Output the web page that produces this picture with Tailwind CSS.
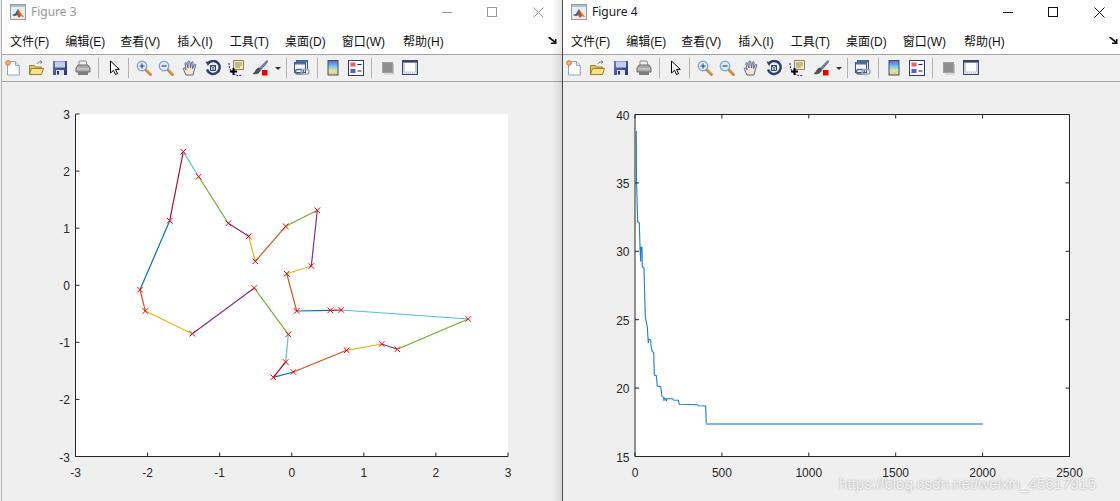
<!DOCTYPE html>
<html lang="en">
<head>
    <meta charset="UTF-8">
    <title>Figure 3 / Figure 4</title>
    <script src="https://cdn.jsdelivr.net/npm/@tailwindcss/browser@4"></script>
</head>
<body class="m-0 overflow-hidden bg-[#efefef] font-['Liberation_Sans','Noto_Sans_CJK_SC',sans-serif]">

<!-- shared toolbar icons -->
<svg class="absolute w-0 h-0">
    <defs>
        <linearGradient id="cb" x1="0" y1="0" x2="0" y2="1">
            <stop offset="0" stop-color="#6a5ad0"/>
            <stop offset=".4" stop-color="#78c8e8"/>
            <stop offset=".7" stop-color="#d8e8a0"/>
            <stop offset="1" stop-color="#f8c080"/>
        </linearGradient>
        <linearGradient id="sv" x1="0" y1="0" x2="1" y2="1">
            <stop offset="0" stop-color="#6a7cc8"/>
            <stop offset="1" stop-color="#26306c"/>
        </linearGradient>
    </defs>
    <symbol id="i-logo" viewBox="0 0 16 16">
        <rect x="0.5" y="0.5" width="15" height="15" fill="#e8eef4" stroke="#9a9a9a"/>
        <rect x="1" y="1" width="14" height="2" fill="#a8c0d8"/>
        <path d="M2 11l3-1 3-5 2 3 4 5-3-1-2 2-2-3-2 1z" fill="#c8501c"/>
        <path d="M2 11l3-1 3-5-1 6-2 1z" fill="#2a6aa8"/>
        <path d="M8 5l2 3 4 5-3-1z" fill="#e88a20"/>
    </symbol>
    <symbol id="i-new" viewBox="0 0 16 16">
        <path d="M2.500 1.500h8l4 4v9.500h-12z" fill="#fff" stroke="#8ea6c6"/>
        <path d="M10.500 1.500v4h4" fill="#dbe6f2" stroke="#8ea6c6"/>
        <path d="M14.500 5.500V15h-1V6z" fill="#b8c8e0"/>
        <circle cx="3" cy="3" r="2.300" fill="#f4b27a" stroke="#e07030"/>
    </symbol>
    <symbol id="i-open" viewBox="0 0 16 16">
        <path d="M1.500 5.500h5l1 1.500h6v7h-12z" fill="#e8c860" stroke="#a08020"/>
        <path d="M1.500 14.500l2-6h12l-2 6z" fill="#f8e490" stroke="#a08020"/>
        <path d="M9 4c1-2 3-2.500 4.500-2M12 .8l2 1.200-1.500 1.700" fill="none" stroke="#6a7a9a"/>
    </symbol>
    <symbol id="i-save" viewBox="0 0 16 16">
        <path d="M1 1h14v14H1z" fill="url(#sv)"/>
        <rect x="3" y="1.500" width="10" height="6" fill="#c4cdee"/>
        <rect x="4" y="10" width="8" height="5" fill="#dfe3ea"/>
        <rect x="5" y="11" width="2" height="3.500" fill="#2a3468"/>
    </symbol>
    <symbol id="i-print" viewBox="0 0 16 16">
        <path d="M4 1h7l1 5H4z" fill="#f0f0f0" stroke="#8c8c8c"/>
        <path d="M1 8l2-3h10l2 3v4H1z" fill="#a8a8a8" stroke="#6e6e6e"/>
        <path d="M3 12h10v3H3z" fill="#7c7c7c"/>
        <path d="M2 9h12" stroke="#d8d8d8"/>
    </symbol>
    <symbol id="i-arrow" viewBox="0 0 16 16">
        <path d="M4.500 1v12l3-2.700 2 4.200 2-1-2-4.100h3.800z" fill="#fff" stroke="#000" stroke-linejoin="round"/>
    </symbol>
    <symbol id="i-zoomin" viewBox="0 0 16 16">
        <path d="M9.500 9.500l5 5" stroke="#c07820" stroke-width="2.600" stroke-linecap="round"/>
        <path d="M9.800 9.300l5 5" stroke="#f0c070" stroke-width="1"/>
        <circle cx="6" cy="6" r="4.800" fill="#dbeaf8" stroke="#7ca0c8" stroke-width="1.200"/>
        <path d="M3.500 6h5M6 3.500v5" stroke="#304a8c" stroke-width="1.200"/>
    </symbol>
    <symbol id="i-zoomout" viewBox="0 0 16 16">
        <path d="M9.500 9.500l5 5" stroke="#c07820" stroke-width="2.600" stroke-linecap="round"/>
        <path d="M9.800 9.300l5 5" stroke="#f0c070" stroke-width="1"/>
        <circle cx="6" cy="6" r="4.800" fill="#dbeaf8" stroke="#7ca0c8" stroke-width="1.200"/>
        <path d="M3.500 6h5" stroke="#304a8c" stroke-width="1.200"/>
    </symbol>
    <symbol id="i-hand" viewBox="0 0 16 16">
        <path d="M4 15L1.500 9.500c-.8-1.500.8-2.200 1.600-1L4 10 3 3.500c0-1.200 1.500-1.200 1.700 0L6 8 6 2c0-1.300 1.800-1.300 1.800 0L8.500 8l1-5.500c.3-1.200 1.800-1 1.600.3L10.500 8.500l1.800-3.800c.6-1 1.800-.5 1.400.6L12 11l-1 4z" fill="#fbe3cc" stroke="#3a5a8c" stroke-width=".9" stroke-linejoin="round"/>
    </symbol>
    <symbol id="i-rotate" viewBox="0 0 16 16">
        <path d="M3 3.500A6.500 6.500 0 1 1 2 9.500" fill="none" stroke="#2c3c6c" stroke-width="2.400"/>
        <path d="M.5 1.500l5 .5-2.500 4z" fill="#2c3c6c"/>
        <path d="M5.500 5.500h5v5h-5z" fill="#c4d0e8" stroke="#2c3c6c"/>
        <path d="M5.500 5.500l2.500 2.500 2.500-2.500M8 8v2.500" fill="none" stroke="#2c3c6c" stroke-width=".7"/>
    </symbol>
    <symbol id="i-tip" viewBox="0 0 16 16">
        <path d="M5.500 .5h10v9h-10z" fill="#f6eeb4" stroke="#8c8460"/>
        <path d="M7 3h7M7 5h7M7 7h5" stroke="#8c8460"/>
        <path d="M1 3c0 6 2 9 5 11s6 2 8 1" fill="none" stroke="#1818d8" stroke-dasharray="2 1"/>
        <path d="M2 11.500h7M5.500 8v7" stroke="#000" stroke-width="2"/>
    </symbol>
    <symbol id="i-brush" viewBox="0 0 16 16">
        <path d="M15 .5L7.500 8 9 9.500 15.500 2z" fill="#7088b8" stroke="#34466c" stroke-width=".7"/>
        <path d="M7 8c-3 .5-3 2.500-4 4-.5 1-1.500 1-2 1.500 2.500 1 6.500 0 7.500-3.500z" fill="#555" stroke="#222" stroke-width=".6"/>
        <rect x="10" y="10" width="5.500" height="5.500" fill="#f00000"/>
    </symbol>
    <symbol id="i-link" viewBox="0 0 16 16">
        <rect x="2.500" y="0.500" width="11" height="9" fill="#e8eef8" stroke="#3c5080"/>
        <rect x="2.500" y="0.500" width="11" height="2" fill="#5070a8"/>
        <rect x="0.500" y="2.500" width="11" height="10" fill="#f4f6fa" stroke="#3c5080"/>
        <rect x="0.500" y="2.500" width="11" height="2" fill="#5070a8"/>
        <rect x="1.500" y="9.500" width="8" height="4.500" rx="2.200" fill="none" stroke="#5c6c84" stroke-width="1.500"/>
        <rect x="7" y="9.500" width="8" height="4.500" rx="2.200" fill="none" stroke="#9aa8bc" stroke-width="1.500"/>
    </symbol>
    <symbol id="i-colorbar" viewBox="0 0 16 16">
        <rect x="3" y="0.500" width="10" height="14.500" fill="url(#cb)" stroke="#3c4c7c"/>
    </symbol>
    <symbol id="i-legend" viewBox="0 0 16 16">
        <rect x="0.500" y="0.500" width="15" height="15" fill="#fbfbfd" stroke="#2c3c6c"/>
        <rect x="2.500" y="2.500" width="5" height="4" fill="#e86060"/>
        <rect x="2.500" y="9" width="5" height="4" fill="#5a5ad8"/>
        <path d="M9.500 4.500h4M9.500 11h4" stroke="#222"/>
    </symbol>
    <symbol id="i-square" viewBox="0 0 16 16">
        <rect x="2.500" y="2.500" width="10" height="10" fill="#8e8e8e" stroke="#a0a0a0"/>
        <path d="M13.500 4v10H4" fill="none" stroke="#c4c4c4"/>
    </symbol>
    <symbol id="i-window" viewBox="0 0 16 16">
        <rect x="0.500" y="0.500" width="15" height="14" fill="#c8ccd4" stroke="#34466c"/>
        <rect x="0.500" y="0.500" width="15" height="2" fill="#34466c"/>
        <rect x="3" y="3" width="10" height="8.500" fill="#fff"/>
        <path d="M1 13h14" stroke="#fff" stroke-dasharray="1 1"/>
    </symbol>
</svg>

<template id="menu-items">
    <span class="ml-[8px]">文件(F)</span>
    <span class="ml-[16px]">编辑(E)</span>
    <span class="ml-[15px]">查看(V)</span>
    <span class="ml-[17px]">插入(I)</span>
    <span class="ml-[17px]">工具(T)</span>
    <span class="ml-[16px]">桌面(D)</span>
    <span class="ml-[16px]">窗口(W)</span>
    <span class="ml-[18px]">帮助(H)</span>
    <svg class="ml-auto mr-[5px] -mt-[4px] w-[9px] h-[7px]" viewBox="0 0 9 7"><path d="M0 0l2 0 5 4V2h1.500v5H3V5.500h3L1 1.500z" fill="#111"/></svg>
</template>

<template id="tool-items">
    <svg class="ml-[3px] w-4 h-4"><use href="#i-new"/></svg>
    <svg class="ml-[7px] w-4 h-4"><use href="#i-open"/></svg>
    <svg class="ml-[8px] w-4 h-4"><use href="#i-save"/></svg>
    <svg class="ml-[7px] w-4 h-4"><use href="#i-print"/></svg>
    <div class="ml-[7px] w-px h-5 bg-[#b4b4b4]"></div>
    <svg class="ml-[7px] w-4 h-4"><use href="#i-arrow"/></svg>
    <div class="ml-[6px] w-px h-5 bg-[#b4b4b4]"></div>
    <svg class="ml-[7px] w-4 h-4"><use href="#i-zoomin"/></svg>
    <svg class="ml-[6px] w-4 h-4"><use href="#i-zoomout"/></svg>
    <svg class="ml-[8px] w-4 h-4"><use href="#i-hand"/></svg>
    <svg class="ml-[7px] w-4 h-4"><use href="#i-rotate"/></svg>
    <svg class="ml-[7px] w-4 h-4"><use href="#i-tip"/></svg>
    <svg class="ml-[8px] w-4 h-4"><use href="#i-brush"/></svg>
    <div class="ml-[7px] w-0 h-0 border-x-[3px] border-t-[3px] border-x-transparent border-t-[#333]"></div>
    <div class="ml-[5px] w-px h-5 bg-[#b4b4b4]"></div>
    <svg class="ml-[7px] w-4 h-4"><use href="#i-link"/></svg>
    <div class="ml-[7px] w-px h-5 bg-[#b4b4b4]"></div>
    <svg class="ml-[7px] w-4 h-4"><use href="#i-colorbar"/></svg>
    <svg class="ml-[7px] w-4 h-4"><use href="#i-legend"/></svg>
    <div class="ml-[7px] w-px h-5 bg-[#b4b4b4]"></div>
    <svg class="ml-[8px] w-4 h-4"><use href="#i-square"/></svg>
    <svg class="ml-[6px] w-4 h-4"><use href="#i-window"/></svg>
</template>

<div class="flex w-[1123px] h-[501px]">

    <!-- Figure 3 -->
    <div class="relative flex flex-col w-[561px] shrink-0 border-l border-[#b0b0b0] ml-px">
        <div class="flex items-center h-[30px] bg-white">
            <svg class="ml-[8px] w-4 h-4 -mt-[6px]"><use href="#i-logo"/></svg>
            <span class="ml-[5px] -mt-[6px] font-['Noto_Sans'] text-[12px] text-[#999]">Figure 3</span>
            <div class="ml-auto -mt-[6px] flex items-center">
                <svg class="w-[10px] h-[10px]" viewBox="0 0 10 10"><path d="M0 5.500h10" stroke="#999"/></svg>
                <svg class="ml-[35px] w-[10px] h-[10px]" viewBox="0 0 10 10"><rect x=".5" y=".5" width="9" height="9" fill="none" stroke="#999"/></svg>
                <svg class="ml-[36px] mr-[18px] w-[11px] h-[11px]" viewBox="0 0 11 11"><path d="M.5.5l10 10M10.500.5l-10 10" stroke="#999"/></svg>
            </div>
        </div>
        <div data-menu class="flex items-center h-[24px] bg-white text-[12px] text-[#111]"></div>
        <div data-tools class="flex items-center h-[28px] bg-[#f0f0f0] border-y border-[#a4a4a4]"></div>
        <svg id="plot3" class="w-[560px] h-[419px] text-[12px]" viewBox="2 82 560 419"></svg>
        <div class="absolute right-0 top-0 bottom-0 w-[10px] bg-gradient-to-l from-black/10 to-transparent"></div>
    </div>
    <div class="w-[1px] shrink-0 bg-[#4a4a4a]"></div>

    <!-- Figure 4 -->
    <div class="flex flex-col w-[560px] shrink-0">
        <div class="flex items-center h-[30px] bg-white">
            <svg class="ml-[8px] w-4 h-4 -mt-[6px]"><use href="#i-logo"/></svg>
            <span class="ml-[5px] -mt-[6px] font-['Noto_Sans'] text-[12px] text-[#1a1a1a]">Figure 4</span>
            <div class="ml-auto -mt-[6px] flex items-center">
                <svg class="w-[10px] h-[10px]" viewBox="0 0 10 10"><path d="M0 5.500h10" stroke="#111"/></svg>
                <svg class="ml-[35px] w-[10px] h-[10px]" viewBox="0 0 10 10"><rect x=".5" y=".5" width="9" height="9" fill="none" stroke="#111"/></svg>
                <svg class="ml-[36px] mr-[18px] w-[11px] h-[11px]" viewBox="0 0 11 11"><path d="M.5.5l10 10M10.500.5l-10 10" stroke="#111"/></svg>
            </div>
        </div>
        <div data-menu class="flex items-center h-[24px] bg-white text-[12px] text-[#111]"></div>
        <div data-tools class="flex items-center h-[28px] bg-[#f0f0f0] border-y border-[#a4a4a4]"></div>
        <svg id="plot4" class="w-[560px] h-[419px] text-[12px]" viewBox="563 82 560 419"></svg>
    </div>
</div>

<div class="absolute left-[839px] top-[473px] text-[15.100px] text-white/80 [text-shadow:0_0_2px_rgba(110,110,110,0.7)]">https://blog.csdn.net/weixin_45617915</div>

<script>
    document.querySelectorAll('[data-menu]').forEach(el => el.append(document.getElementById('menu-items').content.cloneNode(true)));
    document.querySelectorAll('[data-tools]').forEach(el => el.append(document.getElementById('tool-items').content.cloneNode(true)));

    const AXIS = '#262626';

    function drawAxes(box, xLabels, yLabels, closed) {
        const [x0, y0, x1, y1] = box; // left, top, right, bottom
        let out = `<rect x="${x0}" y="${y0}" width="${x1 - x0}" height="${y1 - y0}" fill="#fff"/>`;
        let frame = `M${x0} ${y0}V${y1}H${x1}`;
        if (closed) frame += `V${y0}H${x0}`;
        xLabels.forEach((label, i) => {
            const x = x0 + (x1 - x0) * i / (xLabels.length - 1);
            frame += `M${x} ${y1}v-4`;
            if (closed) frame += `M${x} ${y0}v4`;
            out += `<text x="${x}" y="${y1 + 20}" text-anchor="middle" fill="${AXIS}">${label}</text>`;
        });
        yLabels.forEach((label, i) => {
            const y = y1 + (y0 - y1) * i / (yLabels.length - 1);
            frame += `M${x0} ${y}h4`;
            if (closed) frame += `M${x1} ${y}h-4`;
            out += `<text x="${x0 - 5.500}" y="${y + 5}" text-anchor="end" fill="${AXIS}">${label}</text>`;
        });
        return { out, frame };
    }

    // route plot, Figure 3
    const route = [[140,289.7],[169.7,220.7],[183.3,151.7],[198.7,176.7],[228.3,223.3],[248.7,236.3],[255.3,261.3],
        [285.7,226.3],[317.3,210.3],[311.3,266],[286.7,273.7],[296.7,311],[330.3,310.3],[341.3,310],[468.3,319],
        [397.3,349.3],[381.7,344],[346.7,350.3],[293.3,372],[273.3,377.3],[285.7,362],[288.3,334.3],[254.3,288],
        [192.3,333.7],[145.3,311],[140,289.7]];
    const B = '#0072BD', R = '#A2142F', L = '#4DBEEE', G = '#77AC30', P = '#7E2F8E', Y = '#EDB120', O = '#D95319';
    const segColors = [B,R,L,G,P,Y,O, G,P,Y,O, B,R,L,G,P,Y,O, B,R,L,G,P,Y,O];
    const a3 = drawAxes([75.5,114,508,456.5], [-3,-2,-1,0,1,2,3], [-3,-2,-1,0,1,2,3], false);
    let lines = '', marks = '';
    for (let i = 0; i < route.length - 1; i++) {
        const [xa, ya] = route[i], [xb, yb] = route[i + 1];
        lines += `<line x1="${xa}" y1="${ya}" x2="${xb}" y2="${yb}" stroke="${segColors[i]}" stroke-width="1.200"/>`;
        marks += `<path d="M${xa-2.800} ${ya-2.800}l5.600 5.600m0-5.600l-5.600 5.600" stroke="#f00"/>`;
    }
    document.getElementById('plot3').innerHTML = a3.out + lines + marks +
        `<path d="${a3.frame}" fill="none" stroke="${AXIS}"/>`;

    // convergence plot, Figure 4
    const curve = [[636.3,131],[636.5,180],[637.7,221.7],[639.3,222.7],[640,246.7],[640.7,261.7],[641,247.3],[642,247.3],
        [642.3,266.7],[644,268],[644.3,280],[645.3,316.7],[647.3,326.7],[648.3,343.3],[648.7,339.3],[650.7,340],[651,346],
        [652.3,351.7],[653.7,352.3],[654.3,375],[656.3,375.7],[657.3,386],[660.7,386.7],[662,396.7],[663.7,397.3],[664,401],
        [664.3,398],[666,399.3],[666.4,401],[666.7,398.7],[672.7,398.7],[673.3,400],[678.3,400.3],[679.3,404.3],[697.3,404.7],
        [698.3,405.7],[705.7,406],[706.3,424]];
    const a4 = drawAxes([635,114.5,1069.5,456.5], [0,500,1000,1500,2000,2500], [15,20,25,30,35,40], true);
    document.getElementById('plot4').innerHTML = a4.out +
        `<polyline points="${curve.join(' ')}" fill="none" stroke="#1b80c4" stroke-width="1.100"/>` +
        `<path d="M706 424H983" stroke="#7ab8e2" stroke-width="2"/>` +
        `<path d="${a4.frame}" fill="none" stroke="${AXIS}"/>`;
</script>

</body>
</html>
